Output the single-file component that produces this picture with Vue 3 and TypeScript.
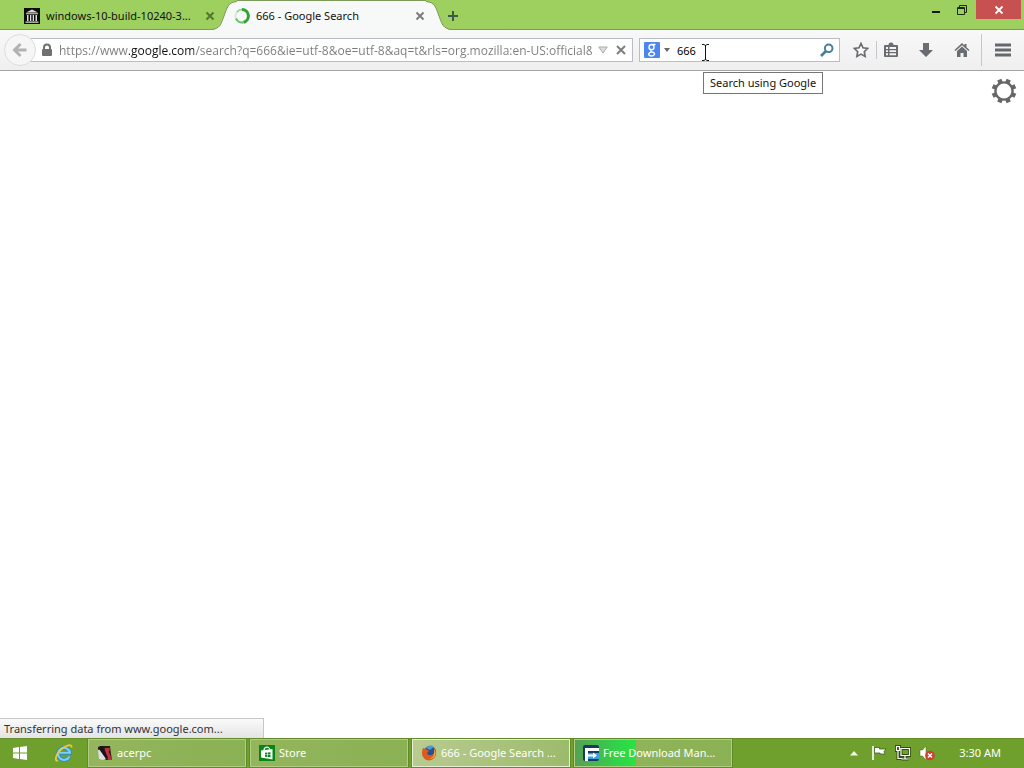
<script setup lang="ts">
import { ref } from 'vue'

const address = ref('https://www.google.com/search?q=666&ie=utf-8&oe=utf-8&aq=t&rls=org.mozilla:en-US:official&client=firefox-a')
const query = ref('666')

interface Task {
  id: string
  label: string
  active?: boolean
  progress?: number
}

const tasks: Task[] = [
  { id: 'acer', label: 'acerpc' },
  { id: 'store', label: 'Store' },
  { id: 'firefox', label: '666 - Google Search ...', active: true },
  { id: 'fdm', label: 'Free Download Man...', progress: 39 },
]
</script>

<template>
  <div class="desktop">
    <header class="titlebar">
      <div class="tabs">
        <div class="tab idle">
          <svg class="favicon" viewBox="0 0 16 16" aria-hidden="true">
            <rect width="16" height="16" fill="#0b0d0a" />
            <path d="M2 4.500 8 1.500l6 3zM2 5.200h12v1H2zM3 7h1.500v6H3zM6 7h1.300v6H6zM8.700 7H10v6H8.700zM11.500 7H13v6h-1.500zM1.500 13.500h13v1.200h-13z" fill="#d9dcd8" />
          </svg>
          <span class="tab-title">windows-10-build-10240-3...</span>
          <button class="tab-close" aria-label="Close tab">
            <svg viewBox="0 0 10 10"><path d="m1.500 1.500 7 7m0-7-7 7" stroke="#567531" stroke-width="2" /></svg>
          </button>
        </div>
        <div class="tab current">
          <svg class="cap" viewBox="0 0 26 30" aria-hidden="true">
            <path d="M0 30C9 29 10 24 13 16S17 2 26 2v28z" fill="#f7f8f8" />
            <path d="M0 29.500C9 29 10 24 13 16S17 2 26 1.500" fill="none" stroke="#7d9a58" />
          </svg>
          <div class="tab-body">
            <svg class="favicon" viewBox="0 0 16 16" aria-hidden="true">
              <circle cx="8" cy="8" r="6.500" fill="none" stroke="#d5ebd4" stroke-width="2" />
              <path d="M8 1.500a6.500 6.500 0 0 1 1.500 12.800" fill="none" stroke="#2fa52f" stroke-width="3" />
              <path d="M9.500 14.300A6.500 6.500 0 0 1 2 10.500" fill="none" stroke="#6fc26d" stroke-width="2" />
              <path d="M3 4a6.500 6.500 0 0 1 5-2.500" fill="none" stroke="#8fd08d" stroke-width="1.500" />
            </svg>
            <span class="tab-title">666 - Google Search</span>
            <button class="tab-close" aria-label="Close tab">
              <svg viewBox="0 0 10 10"><path d="m1.500 1.500 7 7m0-7-7 7" stroke="#7c7c7c" stroke-width="2" /></svg>
            </button>
          </div>
          <svg class="cap" viewBox="0 0 26 30" aria-hidden="true">
            <path d="M26 30C17 29 16 24 13 16S9 2 0 2v28z" fill="#f7f8f8" />
            <path d="M26 29.500C17 29 16 24 13 16S9 2 0 1.500" fill="none" stroke="#7d9a58" />
          </svg>
        </div>
        <button class="new-tab" aria-label="Open a new tab">
          <svg viewBox="0 0 10 10"><path d="M5 0v10M0 5h10" stroke="#3d5a4c" stroke-width="2" /></svg>
        </button>
      </div>
      <div class="window-buttons">
        <button class="win" aria-label="Minimize">
          <svg width="12" height="12" viewBox="0 0 12 12"><path d="M2 8h8" stroke="#111c08" stroke-width="2" /></svg>
        </button>
        <button class="win" aria-label="Restore">
          <svg width="12" height="12" viewBox="0 0 12 12"><path d="M1.500 3.500h7v7h-7zM1 4.500h8M3.500 3V1.500h7v7H9" fill="none" stroke="#1c2b10" /></svg>
        </button>
        <button class="win close" aria-label="Close">
          <svg width="10" height="10" viewBox="0 0 10 10"><path d="m1.500 1.500 7 7m0-7-7 7" stroke="#fff" stroke-width="1.800" /></svg>
        </button>
      </div>
    </header>

    <nav class="toolbar">
      <button class="back" aria-label="Back" disabled>
        <svg width="16" height="16" viewBox="0 0 16 16"><path d="M14.500 8H3M8.500 2 2.500 8l6 6" fill="none" stroke="#b1b2b2" stroke-width="3" /></svg>
      </button>
      <div class="field url">
        <svg class="lock" width="12" height="14" viewBox="0 0 12 14" aria-hidden="true">
          <path d="M3 7V4.500a3 3 0 0 1 6 0V7" fill="none" stroke="#707070" stroke-width="2" />
          <rect x="1" y="6" width="10" height="7" rx="1" fill="#707070" />
        </svg>
        <input v-model="address" class="address" type="text" aria-label="Address" spellcheck="false" />
        <button class="mini" aria-label="Show history">
          <svg width="10" height="8" viewBox="0 0 10 8"><path d="M.8 1h8.400L5 7z" fill="#dedede" stroke="#aaa" /></svg>
        </button>
        <button class="mini stop" aria-label="Stop loading">
          <svg width="10" height="10" viewBox="0 0 10 10"><path d="m1 1 8 8m0-8L1 9" stroke="#7e7e7e" stroke-width="2" /></svg>
        </button>
      </div>
      <div class="field search">
        <button class="engine" aria-label="Search engine: Google">
          <svg width="16" height="16" viewBox="0 0 16 16">
            <rect width="16" height="16" rx="1" fill="#4a87ee" />
            <path d="M11.500 2.500H8C6 2.500 5 3.700 5 5.200s1.100 2.500 2.500 2.500S10 6.700 10 5.200 9.200 2.700 8 2.700M7.500 7.700c-1.300.8-1 1.700.5 2.200 2 .6 2.700 1.200 2.500 2.300-.3 1.500-1.500 1.800-2.800 1.800-1.700 0-3-.6-3-1.900s1.500-2.100 3.500-2" fill="none" stroke="#fff" stroke-width="1.400" />
          </svg>
          <svg width="6" height="4" viewBox="0 0 6 4"><path d="M0 0h6L3 4z" fill="#666" /></svg>
        </button>
        <input v-model="query" class="query" type="text" aria-label="Search using Google" />
        <svg class="ibeam" width="9" height="17" viewBox="0 0 9 17" aria-hidden="true">
          <path d="M1 .5h2l1.500 1L6 .5h2M4.500 1v15M1 16.500h2l1.500-1 1.500 1h2" fill="none" stroke="#111" />
        </svg>
        <button class="mini" aria-label="Search">
          <svg width="14" height="14" viewBox="0 0 14 14"><circle cx="8.700" cy="5.300" r="3.800" fill="none" stroke="#467f99" stroke-width="2" /><path d="m6 8-5 5" stroke="#467f99" stroke-width="2.600" /></svg>
        </button>
        <div class="tooltip" role="tooltip">Search using Google</div>
      </div>
      <div class="tools">
        <button class="tool" aria-label="Bookmark this page">
          <svg width="16" height="16" viewBox="0 0 16 16"><path d="m8 1.500 2 4.300 4.700.6-3.400 3.300.8 4.700L8 12.100l-4.100 2.300.8-4.700L1.300 6.400 6 5.800z" fill="#fafafa" stroke="#696c70" stroke-width="1.700" /></svg>
        </button>
        <i class="rule short"></i>
        <button class="tool bookmarks" aria-label="Show your bookmarks">
          <svg width="16" height="16" viewBox="0 0 16 16"><path d="M2 3h3.500a2.500 2.500 0 0 1 5 0H14q1 0 1 1v10q0 1-1 1H2q-1 0-1-1V4q0-1 1-1z" fill="#696c70" /><path d="M3 5h2v2H3zm3.500 0H13v2H6.500zM3 8.200h2v1.900H3zm3.500 0H13v1.900H6.500zM3 11.300h2v1.900H3zm3.500 0H13v1.900H6.500z" fill="#f4f4f4" /></svg>
        </button>
        <button class="tool downloads" aria-label="Downloads">
          <svg width="16" height="16" viewBox="0 0 16 16"><path d="M5 1h6v7h4l-7 7-7-7h4z" fill="#696c70" /></svg>
        </button>
        <button class="tool" aria-label="Home">
          <svg width="16" height="16" viewBox="0 0 16 16"><path d="m8 1 2.500 2.400V2h2v3.300L15.500 8l-1 1L8 3.200 1.500 9l-1-1z" fill="#696c70" /><path d="m8 4.500 5 4.500v6H9.500v-4h-3v4H3V9z" fill="#696c70" /></svg>
        </button>
        <i class="rule tall"></i>
        <button class="tool menu" aria-label="Open menu">
          <svg width="16" height="14" viewBox="0 0 16 14"><path d="M0 2h16M0 7h16M0 12h16" stroke="#65686c" stroke-width="2.800" /></svg>
        </button>
      </div>
    </nav>

    <main class="page">
      <button class="gear" aria-label="Settings">
        <svg width="24" height="24" viewBox="0 0 24 24">
          <g stroke="#676767" stroke-width="4.500">
            <path v-for="n in 4" :key="n" d="M12 -.3v24.600" :transform="`rotate(${n * 45 - 22.5} 12 12)`" />
          </g>
          <circle cx="12" cy="12" r="8.600" fill="#fff" stroke="#676767" stroke-width="2.400" />
        </svg>
      </button>
      <div class="status" role="status">Transferring data from www.google.com...</div>
    </main>

    <footer class="taskbar">
      <button class="start" aria-label="Start">
        <svg width="14" height="14" viewBox="0 0 14 14"><path d="m0 2 6-.9v5.400H0zm7-1 7-1v6.500H7zM0 7.500h6v5.400L0 12zm7 0h7V14l-7-1z" fill="#fff" /></svg>
      </button>
      <button class="ie" aria-label="Internet Explorer">
        <svg width="18" height="18" viewBox="0 0 18 18">
          <path d="M14.500 12.500a6 6 0 1 1 .5-3.700H4.500" fill="none" stroke="#2b8bd1" stroke-width="3.800" />
          <path d="M14.500 12.500a6 6 0 1 1 .5-3.700H4.500" fill="none" stroke="#7cd0f3" stroke-width="2" />
          <path d="M3 16.500C-1 18 1 10 6 5.500S17-.5 16.500 3.500" fill="none" stroke="#f0c83a" stroke-width="1.800" />
        </svg>
      </button>
      <div class="tasks">
        <button v-for="task in tasks" :key="task.id" class="task" :class="{ active: task.active }">
          <span v-if="task.progress" class="progress" :style="{ width: task.progress + '%' }"></span>
          <svg v-if="task.id === 'acer'" class="task-icon" viewBox="0 0 16 16" aria-hidden="true">
            <path d="M1 2 4 1h9l1 8 1 6H9L1 5z" fill="#27191b" /><path d="m1 5 3-1 6 9-4 2-4-1z" fill="#d9e1e3" /><path d="M8 3h5l-1 4 3 8h-4L7 6z" fill="#bd323c" /><path d="m3 1 3 0 5 12-2 1L2 4z" fill="#191416" />
          </svg>
          <svg v-else-if="task.id === 'store'" class="task-icon" viewBox="0 0 16 16" aria-hidden="true">
            <rect width="16" height="16" fill="#078516" /><path d="M2 5.500 13.500 4v10.500L2 12.500z" fill="#fff" /><path d="M5 5.500c0-4 5.500-4.500 5.500-1" fill="none" stroke="#fff" stroke-width="1.200" /><path d="m6 7.700 2.300-.2V9.400H6zm2.900-.3 2.600-.2v2.200H8.900zM6 10h2.300v1.900L6 11.700zm2.900 0h2.600v2.200l-2.600-.3z" fill="#078516" />
          </svg>
          <svg v-else-if="task.id === 'firefox'" class="task-icon" viewBox="0 0 16 16" aria-hidden="true">
            <circle cx="9" cy="7" r="6" fill="#24518f" /><path d="M5 3c2-3 6-3 8-1L9 5z" fill="#4e9ac4" /><path d="M2 3c1 0 2 1 3 1l3 2-2 2c1 3 5 3 7 0 1-2 0-4 0-5 3 3 3 8-1 11S2 15 1 9c0-2 0-4 1-6z" fill="#df581e" /><path d="M13 4c3 4 1 10-5 10 4-1 6-4 5-10z" fill="#f5b63c" />
          </svg>
          <svg v-else class="task-icon" viewBox="0 0 16 16" aria-hidden="true">
            <rect width="16" height="16" rx="2" fill="#173b60" /><path d="M2 3h14v3H5v10H2z" fill="#fff" /><path d="M5 8h11v6H5z" fill="#3aa0dc" /><path d="M5 9.500h5V7.500l4 3-4 3v-2H5z" fill="#fff" />
          </svg>
          <span class="task-label">{{ task.label }}</span>
        </button>
      </div>
      <div class="tray">
        <button aria-label="Show hidden icons"><svg width="8" height="5" viewBox="0 0 8 5"><path d="m4 0 4 4.500H0z" fill="#f4f8ec" /></svg></button>
        <button class="flag" aria-label="Action Center"><svg width="16" height="16" viewBox="0 0 16 16"><path d="M2 1v14" stroke="#fff" stroke-width="1.600" /><path d="M3.500 2.500h5v1.500H15L13 6.500l1 2.500H9V8H3.500z" fill="#fff" stroke="#345314" stroke-width=".7" /></svg></button>
        <button class="network" aria-label="Network"><svg width="16" height="16" viewBox="0 0 16 16"><path d="M6 3.500h8.500v7H6zM10 11v2.500M6.500 14h7M1.500 1.500h3v4h-3zM3 6v7.500h4" fill="none" stroke="#304d13" stroke-width="3" /><path d="M6 3.500h8.500v7H6zM10 11v2.500M6.500 14h7M1.500 1.500h3v4h-3zM3 6v7.500h4" fill="none" stroke="#fff" stroke-width="1.200" /></svg></button>
        <button class="volume" aria-label="Volume muted"><svg width="16" height="16" viewBox="0 0 16 16"><path d="M1 5h2.500L7 1v14l-3.500-4H1z" fill="#fff" stroke="#48691e" stroke-width=".5" /><circle cx="11" cy="10.500" r="4.800" fill="#d53b31" /><path d="m9 8.500 4 4m0-4-4 4" stroke="#fff" stroke-width="1.500" /></svg></button>
        <time class="clock">3:30 AM</time>
      </div>
    </footer>
  </div>
</template>

<style>
body {
  margin: 0;
}
</style>

<style scoped>
.desktop {
  height: 100vh;
  display: flex;
  flex-direction: column;
  overflow: hidden;
  background: #fff;
  color: #111;
  font: 11px/16px "Noto Sans", "Open Sans", sans-serif;
}
button {
  display: flex;
  align-items: center;
  justify-content: center;
  flex: none;
  padding: 0;
  border: 0;
  background: none;
  color: inherit;
  font: inherit;
}
input {
  min-width: 0;
  padding: 0;
  border: 0;
  outline: 0;
  background: none;
  font: inherit;
}
svg {
  display: block;
  flex: none;
}
.titlebar {
  display: flex;
  justify-content: space-between;
  height: 30px;
  background: linear-gradient(#7d9a58, #7d9a58) bottom / 100% 1px no-repeat, #9dd05f;
}
.tabs,
.tab,
.tab-body {
  display: flex;
  align-items: center;
}
.tab.idle {
  width: 187px;
  padding: 2px 0 0 24px;
}
.tab-body {
  width: 189px;
  height: 30px;
  box-sizing: border-box;
  border-top: 1px solid #7d9a58;
  padding-top: 1px;
  background: #f7f8f8;
}
.tab-body .favicon {
  margin-left: -3px;
}
.cap {
  width: 26px;
  height: 30px;
}
.favicon {
  width: 16px;
  height: 16px;
}
.tab-title {
  flex: 1;
  padding-left: 6px;
  white-space: nowrap;
}
.tab-close {
  width: 10px;
  height: 10px;
}
.tab.idle .tab-close {
  margin-right: -4px;
}
.tab-close svg,
.new-tab svg {
  width: 100%;
}
.tab.current .tab-close {
  margin-right: 1px;
}
.new-tab {
  width: 10px;
  height: 10px;
  margin: 2px 0 0 -4px;
}
.window-buttons {
  display: flex;
  padding-right: 3px;
}
.win {
  width: 26px;
  height: 19px;
}
.win.close {
  width: 45px;
  margin-left: 1px;
  background: #c75050;
}
.toolbar {
  display: flex;
  align-items: center;
  height: 40px;
  border-bottom: 1px solid #a4a4a4;
  background: linear-gradient(#f8f8f8, #efefef);
}
.back {
  width: 32px;
  height: 32px;
  margin: 0 -18px 0 4px;
  z-index: 1;
  border: 1px solid #dcdddd;
  border-radius: 50%;
  background: #f6f6f6;
}
.field {
  position: relative;
  display: flex;
  align-items: center;
  box-sizing: border-box;
  min-width: 0;
  height: 24px;
  border: 1px solid #b9bec4;
  background: #fff;
}
.url {
  flex: 1 1 0;
  padding: 0 6px 0 22px;
}
.address {
  flex: 1;
  margin: 0 6px;
  padding-top: 2px;
  background: linear-gradient(90deg, #7b7b7b 70px, #111 70px, #111 135px, #7b7b7b 135px);
  background-clip: text;
  color: transparent;
  font-family: "Open Sans", "Noto Sans", sans-serif;
  font-size: 12px;
}
.stop {
  margin-left: 8px;
}
.search {
  flex: 0 1 201px;
  margin-left: 6px;
  padding: 0 5px 0 4px;
}
.engine {
  gap: 4px;
}
.query {
  flex: 1;
  margin-left: 7px;
  padding-top: 1px;
}
.ibeam {
  position: absolute;
  left: 61px;
  top: 5px;
}
.tooltip {
  position: absolute;
  left: 63px;
  top: 33px;
  z-index: 2;
  padding: 2px 6px;
  border: 1px solid #767676;
  background: #fff;
  white-space: nowrap;
}
.tools {
  display: flex;
  align-items: center;
  flex: none;
  padding: 0 13px;
}
.tool {
  width: 16px;
}
.rule {
  width: 1px;
  background: #c6c7c8;
}
.short {
  height: 18px;
  margin: 0 6px 0 7px;
}
.tall {
  height: 32px;
  margin: 0 13px 0 11px;
}
.bookmarks {
  margin-right: 19px;
}
.downloads {
  margin-right: 20px;
}
.page {
  flex: 1;
  display: flex;
  flex-direction: column;
  justify-content: space-between;
}
.gear {
  align-self: flex-end;
  margin: 8px 8px 0;
}
.gear svg {
  overflow: visible;
}
.status {
  box-sizing: border-box;
  width: 264px;
  height: 20px;
  padding: 1px 4px;
  border: 1px solid #c7c7c7;
  border-width: 1px 1px 0 0;
  background: linear-gradient(#fafafa, #e4e4e4);
  color: #333;
  line-height: 18px;
  white-space: nowrap;
}
.taskbar {
  display: flex;
  align-items: center;
  height: 30px;
  flex: none;
  box-shadow: inset 0 1px #659028;
  background: #6fa02d;
  color: #fff;
}
.start {
  width: 39px;
  height: 30px;
}
.ie {
  width: 49px;
  height: 30px;
}
.tasks {
  flex: 0 1 644px;
  min-width: 0;
  display: flex;
  gap: 4px;
}
.task {
  position: relative;
  flex: 1 1 0;
  min-width: 0;
  height: 28px;
  justify-content: flex-start;
  gap: 4px;
  padding-left: 8px;
  border: 1px solid #b1cc84;
  outline: 1px solid #618b29;
  background: linear-gradient(100deg, #94b55d, #8ab153);
  overflow: hidden;
}
.task.active {
  border-color: #e7efd5;
  background: linear-gradient(100deg, #b9cb91, #9cba6b);
}
.progress {
  position: absolute;
  inset: 0 auto 0 0;
  background: linear-gradient(90deg, #57a054, #31d34a 70%, #28e342);
}
.task-icon {
  position: relative;
  width: 16px;
  height: 16px;
}
.task-label {
  position: relative;
  white-space: nowrap;
}
.tray {
  display: flex;
  align-items: center;
  margin-left: auto;
  padding-right: 23px;
}
.flag {
  margin-left: 13px;
}
.network,
.volume {
  margin-left: 8px;
}
.clock {
  margin-left: 24px;
}
</style>
